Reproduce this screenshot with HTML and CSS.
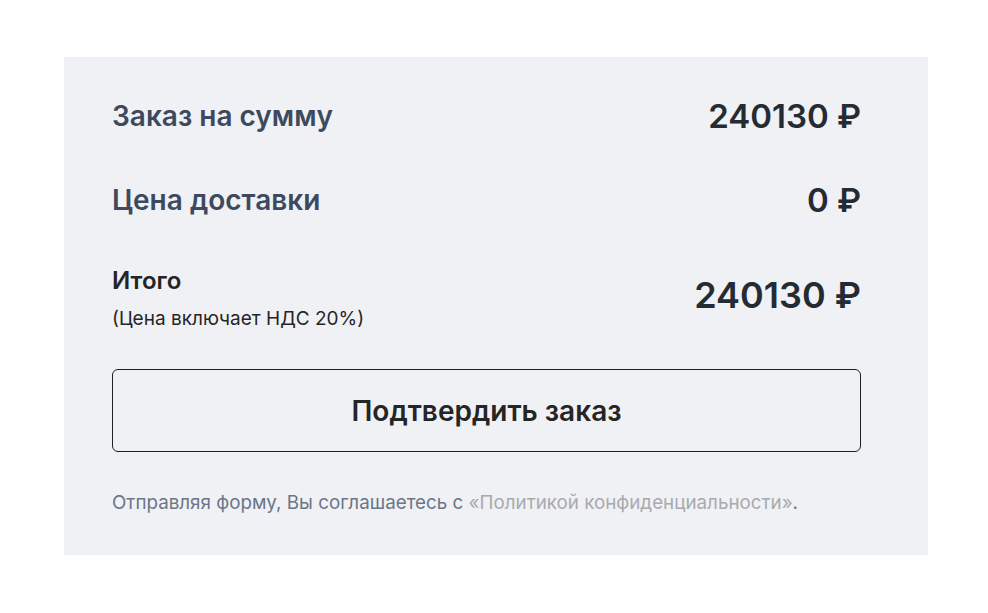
FILE: index.html
```html
<!DOCTYPE html>
<html lang="ru">
<head>
<meta charset="utf-8">
<link rel="stylesheet" href="styles.css">
</head>
<body>
<div class="page">
  <section class="summary">
    <div class="row row-sum">
      <span class="label">Заказ на сумму</span>
      <span class="value">240130 ₽</span>
    </div>
    <div class="row row-delivery">
      <span class="label">Цена доставки</span>
      <span class="value">0 ₽</span>
    </div>
    <div class="row row-total">
      <div class="total-label">
        <span class="total-title">Итого</span>
        <span class="total-note">(Цена включает НДС 20%)</span>
      </div>
      <span class="value value-big">240130 ₽</span>
    </div>
    <button class="confirm" type="button">Подтвердить заказ</button>
    <p class="agree">Отправляя форму, Вы соглашаетесь с <a class="policy" href="#">«Политикой конфиденциальности»</a>.</p>
  </section>
</div>
</body>
</html>
```
FILE: styles.css
```css
* { box-sizing: border-box; }
html, body { margin: 0; padding: 0; background: #ffffff; }
body { font-family: Inter, "Noto Sans", "DejaVu Sans", sans-serif; }
.page { padding: 57px 60px 58px 64px; }
.summary {
  width: 864px;
  height: 498px;
  background: #f0f1f5;
  padding: 24px 67px 0 48px;
  display: flex;
  flex-direction: column;
}
.row { display: flex; justify-content: space-between; align-items: center; }
.row-sum { height: 70px; }
.row-delivery { height: 70px; margin-top: 14px; }
.row-total { margin-top: 10px; height: 100px; }
.label { font-size: 28px; font-weight: 600; color: #3d4a5e; }
.value { font-size: 33px; font-weight: 600; color: #252b33; }
.value-big { font-size: 36px; }
.total-label { display: flex; flex-direction: column; gap: 13px; padding-top: 8px; }
.total-title { font-size: 24px; font-weight: 600; color: #252525; line-height: 1.15; }
.total-note { font-size: 19px; font-weight: 400; color: #252525; line-height: 1.2; }
.confirm {
  margin-top: 24px;
  height: 83px;
  width: 749px;
  border: 1px solid #1f1f1f;
  border-radius: 6px;
  background: transparent;
  font-family: inherit;
  font-size: 28px;
  font-weight: 600;
  color: #252525;
  cursor: pointer;
}
.agree { margin: 39px 0 0; font-size: 18.8px; line-height: 23px; color: #6b7686; }
.policy { color: #a8aaae; text-decoration: none; }
```
